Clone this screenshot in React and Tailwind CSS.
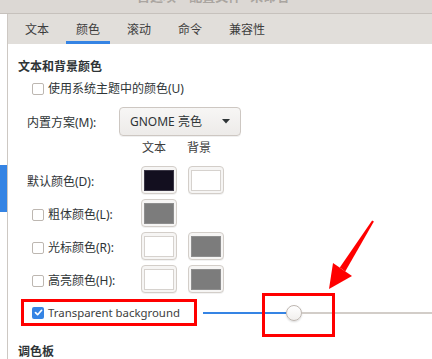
import React from 'react';

const tabs = ['文本', '颜色', '滚动', '命令', '兼容性'];

function CheckBox({ checked }) {
    if (checked) {
        return (
            <div className="w-[12px] h-[12px] rounded-[2px] bg-[#3584e4] flex items-center justify-center shrink-0">
                <svg width="9" height="9" viewBox="0 0 9 9">
                    <path d="M1.5 4.6 L3.6 6.7 L7.6 2.3" fill="none" stroke="#fff" strokeWidth="1.7" strokeLinecap="round" strokeLinejoin="round" />
                </svg>
            </div>
        );
    }
    return <div className="w-[12px] h-[12px] rounded-[2px] border border-[#bdb7b1] bg-white shrink-0"></div>;
}

function Swatch({ color }) {
    return (
        <div className="w-[36px] h-[28px] rounded-[4px] border border-[#d3cec9] bg-[#f6f5f4] shadow-[0_1px_0_rgba(0,0,0,0.05)] flex items-center justify-center shrink-0">
            <div className={`w-[30px] h-[21px] border ${color}`}></div>
        </div>
    );
}

function ColorRow({ label, check, fg, bg }) {
    return (
        <div className="flex items-center h-[28px] mt-[5px]">
            <div className={`w-[123px] flex items-center gap-[4px] pt-[3px] ${check ? 'pl-[14px]' : 'pl-[9px]'}`}>
                {check && <CheckBox />}
                <span>{label}</span>
            </div>
            <Swatch color={fg} />
            {bg && <div className="ml-[11px]"><Swatch color={bg} /></div>}
        </div>
    );
}

export default function App() {
    return (
        <div className="relative w-[432px] h-[359px] overflow-hidden bg-white flex flex-col font-['Noto_Sans','Noto_Sans_CJK_SC',sans-serif] text-[12px] text-[#2e3436]">
            {/* title bar, mostly cut off */}
            <div className="h-[14px] bg-[#dcd8d4] border-b border-[#c6c1bc] overflow-hidden flex justify-center shrink-0">
                <div className="-mt-[12px] text-[13px] leading-[16px] text-[#aaa5a0] font-bold">首选项 – 配置文件 “未命名”</div>
            </div>

            <div className="flex flex-1 min-h-0">
                <div className="w-[8px] border-r border-[#cdc8c3] bg-white shrink-0">
                    <div className="mt-[151px] w-[7px] h-[47px] bg-[#3584e4]"></div>
                </div>

                <div className="flex-1 flex flex-col">
                    {/* tabs */}
                    <div className="h-[30px] bg-[#e1deda] flex pl-[7px] gap-[7px] shrink-0">
                        {tabs.map((t, i) => (
                            <div
                                key={t}
                                className={`h-full px-[10px] pt-[5px] flex items-center border-b-[3px] text-[#3d3d3d] ${i === 1 ? 'border-[#3584e4]' : 'border-transparent'}`}
                            >
                                {t}
                            </div>
                        ))}
                    </div>

                    <div className="flex flex-col pl-[10px]">
                        <div className="mt-[14px] h-[17px] leading-[17px] font-bold">文本和背景颜色</div>

                        <div className="mt-[6px] h-[16px] flex items-center pl-[14px] gap-[4px]">
                            <CheckBox />
                            <span>使用系统主题中的颜色(U)</span>
                        </div>

                        <div className="mt-[10px] h-[29px] flex items-center pl-[9px]">
                            <div className="w-[92px] pt-[3px]">内置方案(M):</div>
                            <div className="w-[122px] h-full rounded-[4px] border border-[#cdc7c2] bg-gradient-to-b from-[#f7f6f5] to-[#edebe9] shadow-[0_1px_0_rgba(0,0,0,0.06)] flex items-center justify-between px-[10px]">
                                <span>GNOME 亮色</span>
                                <svg width="8" height="5" viewBox="0 0 8 5">
                                    <path d="M0 0 H8 L4 4.5 Z" fill="#2e3436" />
                                </svg>
                            </div>
                        </div>

                        <div className="mt-[5px] h-[14px] leading-[14px] flex pl-[124px] text-[#3d3d3d]">
                            <span>文本</span>
                            <span className="ml-[21px]">背景</span>
                        </div>

                        <div className="mt-[6px]"></div>
                        <ColorRow label="默认颜色(D):" fg="bg-[#130f1f] border-[#3a3645]" bg="bg-white border-[#d6d2ce]" />
                        <ColorRow label="粗体颜色(L):" check fg="bg-[#7c7c7c] border-[#8e8e8e]" />
                        <ColorRow label="光标颜色(R):" check fg="bg-white border-[#d6d2ce]" bg="bg-[#7c7c7c] border-[#8e8e8e]" />
                        <ColorRow label="高亮颜色(H):" check fg="bg-white border-[#d6d2ce]" bg="bg-[#7c7c7c] border-[#8e8e8e]" />

                        <div className="mt-[6px] h-[27px] flex items-center">
                            <div className="ml-[3px] w-[176px] h-full border-[3px] border-[#ff0000] flex items-center pl-[8px] gap-[4px]">
                                <CheckBox checked />
                                <span className="text-[11.4px] text-[#3d3d3d]">Transparent background</span>
                            </div>
                            <div className="relative ml-[6px] flex-1 h-full flex items-center">
                                <div className="w-[83px] h-[2px] bg-[#3584e4]"></div>
                                <div className="w-[16px] h-[16px] rounded-full bg-gradient-to-b from-white to-[#f1efed] border border-[#bdb6b0] shadow-[0_1px_2px_rgba(0,0,0,0.15)] shrink-0"></div>
                                <div className="flex-1 h-[2px] bg-[#d2cdc8]"></div>
                                <div className="absolute left-[59px] -top-[6px] w-[73px] h-[44px] border-[3px] border-[#ff0000]"></div>
                            </div>
                        </div>

                        <div className="mt-[19px] h-[14px] leading-[14px] font-bold">调色板</div>
                    </div>
                </div>
            </div>

            {/* annotation arrow */}
            <svg className="absolute left-0 top-0 pointer-events-none" width="432" height="359" viewBox="0 0 432 359">
                <polygon points="373.9,221.6 372.1,220.4 339.8,267.6 345.2,271.4" fill="#ff0000" />
                <polygon points="329,289 333,263 352,276" fill="#ff0000" />
            </svg>
        </div>
    );
}
